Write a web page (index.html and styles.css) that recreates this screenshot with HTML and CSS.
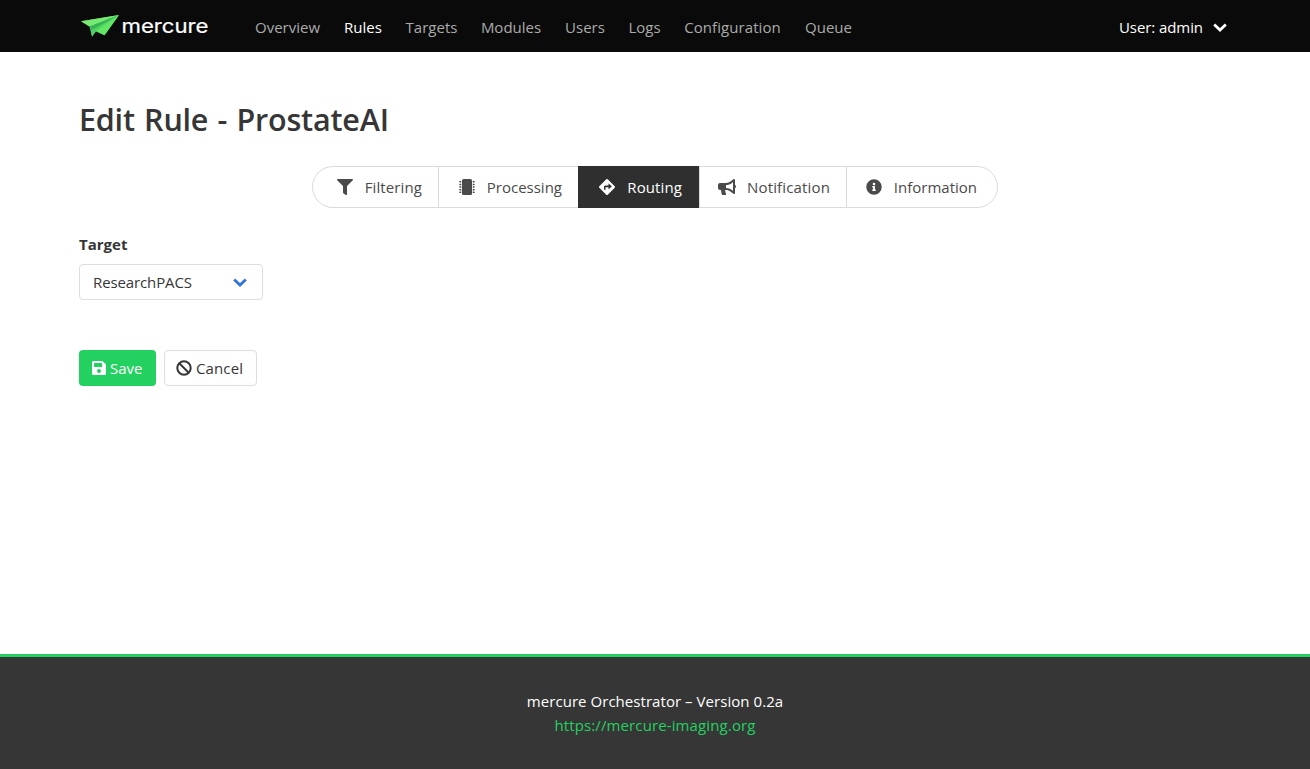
FILE: index.html
```html
<!DOCTYPE html>
<html lang="en">
<head>
<meta charset="utf-8">
<title>mercure</title>
<link rel="stylesheet" href="styles.css">
</head>
<body>
<header class="navbar">
  <a class="brand">
    <svg width="130" height="26" viewBox="0 0 130 26">
      <path d="M2 8.200 10.500 13.500 13 23.800 17 18.500 25.500 22.300 40 2z" fill="#4fd45c"/>
      <path d="M2 8.200 40 2 10.500 13.500z" fill="#78ea74"/>
      <path d="M10.500 13.500 40 2 12.500 17z" fill="#35b356"/>
      <path d="M12.500 17 17 15 13 23.800z" fill="#55c977"/>
      <path d="M17 18 40 2 25.500 22.300z" fill="#62e566"/>
      <text class="brand-text" x="42.500" y="20" textLength="87" lengthAdjust="spacingAndGlyphs">mercure</text>
    </svg>
  </a>
  <nav class="menu">
    <a class="item overview">Overview</a>
    <a class="item rules active">Rules</a>
    <a class="item targets">Targets</a>
    <a class="item modules">Modules</a>
    <a class="item users">Users</a>
    <a class="item logs">Logs</a>
    <a class="item configuration">Configuration</a>
    <a class="item queue">Queue</a>
  </nav>
  <div class="user"><span class="user-name">User: admin</span>
    <svg class="chevron" width="14" height="9" viewBox="0 0 14 9"><path d="M1.200 1.500 7 7l5.800-5.500"/></svg>
  </div>
</header>
<main class="content">
  <h1 class="title">Edit Rule - ProstateAI</h1>
  <div class="tabs">
    <a class="tab filtering"><svg width="16" height="16" viewBox="0 0 512 512"><path d="M488 0H24C3 0-8 26 7 41l185 185v206c0 8 4 15 10 20l80 56c16 11 38 0 38-20V226L505 41c15-15 4-41-17-41z"/></svg><span>Filtering</span></a>
    <a class="tab processing"><svg width="16" height="16" viewBox="0 0 512 512"><path d="M416 48v416a48 48 0 0 1-48 48H144a48 48 0 0 1-48-48V48a48 48 0 0 1 48-48h224a48 48 0 0 1 48 48z"/><path d="M72 64v48H20V96H0V80h20V64zm0 84v48H20v-16H0v-16h20v-16zm0 84v48H20v-16H0v-16h20v-16zm0 84v48H20v-16H0v-16h20v-16zm0 84v48H20v-16H0v-16h20v-16zM440 64v48h52V96h20V80h-20V64zm0 84v48h52v-16h20v-16h-20v-16zm0 84v48h52v-16h20v-16h-20v-16zm0 84v48h52v-16h20v-16h-20v-16zm0 84v48h52v-16h20v-16h-20v-16z"/></svg><span>Processing</span></a>
    <a class="tab routing active"><svg width="16" height="16" viewBox="0 0 512 512"><path fill-rule="evenodd" d="M503 234 278 9a32 32 0 0 0-45 0L9 234a32 32 0 0 0 0 45l225 224a32 32 0 0 0 45 0l224-224a32 32 0 0 0 0-45zm-102 12-84 77c-5 5-13 1-13-6v-53h-96v72c0 4-4 8-8 8h-32c-4 0-8-4-8-8v-80c0-27 21-48 48-48h96v-53c0-7 8-11 13-6l84 78c4 5 4 13 0 18z"/></svg><span>Routing</span></a>
    <a class="tab notification"><svg width="18" height="16" viewBox="0 0 576 512"><path fill-rule="evenodd" d="M576 240c0-24-13-44-32-55V32c0-9-7-32-32-32-7 0-14 2-20 7l-85 68c-43 34-96 53-151 53H64c-35 0-64 29-64 64v96c0 35 29 64 64 64h34c-2 50 8 94 28 142 5 11 17 18 29 18h75c26 0 42-30 26-51-17-22-26-49-26-77 0-11 2-22 5-32h21c55 0 108 19 151 53l85 68c6 5 13 7 20 7 25 0 32-22 32-32V295c19-11 32-31 32-55zm-96 141-33-27c-54-43-122-66-191-66v-96c69 0 137-23 191-66l33-27z"/></svg><span>Notification</span></a>
    <a class="tab information"><svg width="16" height="16" viewBox="0 0 512 512"><path fill-rule="evenodd" d="M256 8a248 248 0 1 0 0 496 248 248 0 0 0 0-496zm0 110a42 42 0 1 1 0 84 42 42 0 0 1 0-84zm56 254c0 7-5 12-12 12h-88c-7 0-12-5-12-12v-24c0-7 5-12 12-12h12v-64h-12c-7 0-12-5-12-12v-24c0-7 5-12 12-12h64c7 0 12 5 12 12v100h12c7 0 12 5 12 12z"/></svg><span>Information</span></a>
  </div>
  <div class="label">Target</div>
  <div class="select"><span>ResearchPACS</span>
    <svg class="chevron" width="14" height="9" viewBox="0 0 14 9"><path d="M1.200 1.500 7 7l5.800-5.500"/></svg>
  </div>
  <div class="buttons">
    <a class="button save"><svg width="14" height="16" viewBox="0 0 448 512"><path fill-rule="evenodd" d="m434 130-84-84a48 48 0 0 0-34-14H48a48 48 0 0 0-48 48v352a48 48 0 0 0 48 48h352a48 48 0 0 0 48-48V164a48 48 0 0 0-14-34zM224 416a64 64 0 1 1 0-128 64 64 0 0 1 0 128zm96-304.500V212c0 7-5 12-12 12H76c-7 0-12-5-12-12V108c0-7 5-12 12-12h228.500z"/></svg><span>Save</span></a>
    <a class="button cancel"><svg width="16" height="16" viewBox="0 0 16 16"><circle cx="8" cy="8" r="6.700"/><path d="m3.300 3.300 9.400 9.400"/></svg><span>Cancel</span></a>
  </div>
</main>
<footer class="footer">
  <div class="version">mercure Orchestrator – Version 0.2a</div>
  <a class="link">https://mercure-imaging.org</a>
</footer>
</body>
</html>
```
FILE: styles.css
```css
* { box-sizing: border-box; }
body {
  margin: 0;
  height: 769px;
  display: flex;
  flex-direction: column;
  background: #fff;
  color: #363636;
  font: 15px/24px "Open Sans", "Noto Sans", sans-serif;
  overflow: hidden;
}
.navbar {
  height: 52px;
  flex: none;
  display: flex;
  align-items: center;
  padding: 2px 83px 0 79px;
  background: #0a0a0a;
  color: #fff;
}
.brand { width: 164px; height: 26px; margin-top: -3px; }
.brand svg { display: block; }
.brand-text { font: 400 20px Inter, sans-serif; fill: #fff; stroke: #fff; stroke-width: 0.200; }
.menu { display: flex; flex: 1; color: #aaa; }
.item { text-align: center; white-space: nowrap; }
.item.active { color: #fff; }
.overview { width: 89px; }
.rules { width: 62px; }
.targets { width: 75px; }
.modules { width: 84px; }
.users { width: 64px; }
.logs { width: 55px; }
.configuration { width: 121px; letter-spacing: 0.080px; }
.queue { width: 71px; }
.user { display: flex; align-items: center; gap: 10px; }
.user-name { letter-spacing: -0.080px; }
.chevron path { fill: none; stroke: currentColor; stroke-width: 2.800; }
.content { flex: 1; padding: 45px 79px 0; }
.title {
  margin: 0;
  font-size: 30.500px;
  line-height: 44px;
  font-weight: 600;
  letter-spacing: -0.200px;
  word-spacing: 1.600px;
}
.tabs {
  display: flex;
  width: 686px;
  height: 42px;
  margin: 25px auto 0;
  color: #4a4a4a;
}
.tab {
  display: flex;
  align-items: center;
  border: 1px solid #dbdbdb;
  border-right: 0;
  white-space: nowrap;
}
.tab svg { fill: currentColor; flex: none; }
.tab span { margin-left: auto; }
.filtering { width: 126px; padding: 0 16px 0 24px; border-radius: 21px 0 0 21px; letter-spacing: 0.100px; }
.processing { width: 140px; padding: 0 16px 0 20px; }
.routing { width: 121px; padding: 0 17px 0 20px; letter-spacing: 0.100px; }
.notification { width: 147px; padding: 0 16px 0 18px; letter-spacing: 0.150px; }
.information { width: 152px; padding: 0 20px 0 19px; border-right: 1px solid #dbdbdb; border-radius: 0 21px 21px 0; }
.tab.active { background: #2f2f2f; border-color: #2f2f2f; color: #fff; }
.label { margin-top: 24px; font-weight: 700; }
.select {
  display: flex;
  align-items: center;
  justify-content: space-between;
  width: 184px;
  height: 36px;
  margin-top: 8px;
  padding: 0 15px 0 13px;
  border: 1px solid #dedede;
  border-radius: 4px;
  letter-spacing: -0.120px;
}
.select .chevron { color: #3273dc; }
.buttons { display: flex; gap: 8px; margin-top: 50px; }
.button { display: flex; align-items: center; gap: 4px; height: 36px; border-radius: 4px; }
.save { width: 77px; padding-left: 13px; background: #23d160; color: #fff; }
.save svg { fill: #fff; }
.cancel { width: 93px; padding-left: 11px; border: 1px solid #dedede; letter-spacing: 0.120px; }
.cancel svg { fill: none; stroke: #363636; stroke-width: 2; }
.footer {
  height: 115px;
  flex: none;
  padding-top: 32px;
  border-top: 3px solid #23d160;
  background: #363636;
  color: #fff;
  text-align: center;
}
.version { letter-spacing: 0.050px; }
.link { color: #23d160; letter-spacing: 0.120px; }
```
